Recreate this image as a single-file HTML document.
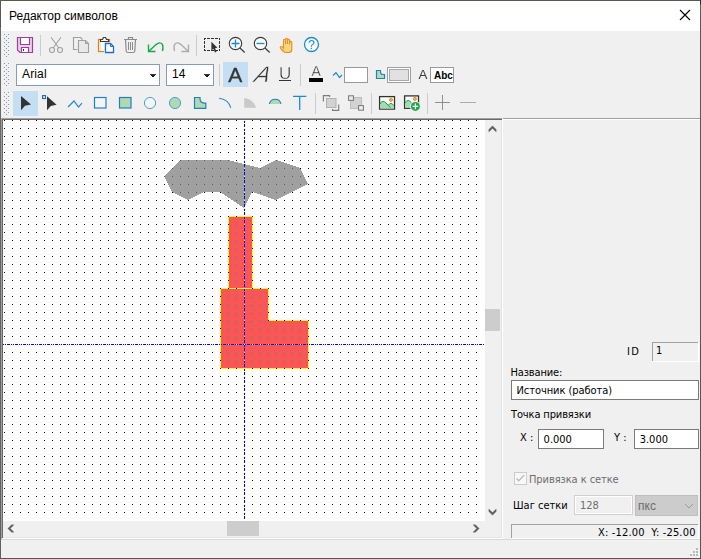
<!DOCTYPE html>
<html lang="ru">
<head>
<meta charset="utf-8">
<title>Редактор символов</title>
<style>
html,body{margin:0;padding:0;}
body{width:701px;height:559px;overflow:hidden;position:relative;background:#f0f0f0;
  font-family:"Liberation Sans","DejaVu Sans",sans-serif;font-size:12px;color:#000;}
.abs{position:absolute;}
#win{position:absolute;left:0;top:0;width:701px;height:559px;background:#f0f0f0;overflow:hidden;}
/* window frame */
#bt{left:0;top:0;width:701px;height:1px;background:#5c594e;}
#bl{left:0;top:0;width:1px;height:559px;background:linear-gradient(#5c594e 0,#5c594e 26px,#404040 26px,#404040 27px,#6a6a6a 27px,#606060 100%);}
#br{left:700px;top:0;width:1px;height:559px;background:linear-gradient(#1a3555 0,#1a3555 4px,#6b6a35 5px,#6b6a35 9px,#585858 12px,#555 100%);}
#bb{left:0;top:558px;width:701px;height:1px;background:#555;}
#title{left:1px;top:1px;width:699px;height:30px;background:#fff;}
#title span{position:absolute;left:8px;top:7px;font-size:12px;line-height:16px;white-space:nowrap;}
.tahoma{font-family:"DejaVu Sans Condensed","Liberation Sans",sans-serif;font-size:11px;line-height:13px;white-space:nowrap;}
.segoe{font-family:"Liberation Sans",sans-serif;font-size:12px;line-height:14px;white-space:nowrap;}
.edit{position:absolute;box-sizing:border-box;border:1px solid #7a7a7a;background:#fff;}
.hl{position:absolute;background:#c4def3;}
.sep{position:absolute;width:1px;background:#cbcbd2;}
svg{position:absolute;left:0;top:0;overflow:visible;}
</style>
</head>
<body>
<div id="win">
  <div class="abs" id="title"><span>Редактор символов</span></div>

  <!-- TOOLBARS -->
  <div id="toolbars">
    <!-- highlighted (checked) buttons -->
    <div class="hl" style="left:223px;top:62px;width:25px;height:25px;"></div>
    <div class="hl" style="left:13px;top:91px;width:25px;height:25px;"></div>
    <!-- separators -->
    <div class="sep" style="left:40px;top:35px;height:21px;"></div>
    <div class="sep" style="left:196px;top:35px;height:21px;"></div>
    <div class="sep" style="left:219px;top:64px;height:22px;"></div>
    <div class="sep" style="left:300px;top:64px;height:22px;"></div>
    <div class="sep" style="left:315px;top:93px;height:21px;"></div>
    <div class="sep" style="left:371px;top:93px;height:21px;"></div>
    <div class="sep" style="left:427px;top:93px;height:21px;"></div>
    <!-- combos -->
    <div class="abs" style="left:16px;top:64px;width:144px;height:22px;box-sizing:border-box;border:1px solid #8799be;background:#fff;"></div>
    <span class="abs segoe" id="t_arial" style="left:22px;top:67px;letter-spacing:0.15px;">Arial</span>
    <div class="abs" style="left:166px;top:64px;width:48px;height:22px;box-sizing:border-box;border:1px solid #8799be;background:#fff;"></div>
    <span class="abs segoe" id="t_14" style="left:172px;top:67px;">14</span>
    <!-- colour wells -->
    <div class="abs" style="left:344px;top:67px;width:24px;height:16px;box-sizing:border-box;border:1px solid #999;background:#fff;"></div>
    <div class="abs" style="left:387px;top:67px;width:24px;height:16px;box-sizing:border-box;border:1px solid #a0a0a0;background:#fff;"></div>
    <div class="abs" style="left:389px;top:69px;width:20px;height:12px;box-sizing:border-box;border:1px solid #a8a8a8;background:#e1e1e1;"></div>
    <div class="abs" style="left:430px;top:67px;width:24px;height:16px;box-sizing:border-box;border:1px solid #999;background:#fff;"></div>
    <span class="abs" id="t_abc" style="left:434px;top:70px;font:bold 10px/12px 'Liberation Sans',sans-serif;">Abc</span>

    <svg id="icons" width="701" height="90" viewBox="0 30 701 90" style="left:0;top:30px;" fill="none">
      <g fill="#8595bb" shape-rendering="crispEdges"><rect x="4" y="34" width="1" height="1"/><rect x="8" y="34" width="1" height="1"/><rect x="6" y="36" width="1" height="1"/><rect x="4" y="38" width="1" height="1"/><rect x="8" y="38" width="1" height="1"/><rect x="6" y="40" width="1" height="1"/><rect x="4" y="42" width="1" height="1"/><rect x="8" y="42" width="1" height="1"/><rect x="6" y="44" width="1" height="1"/><rect x="4" y="46" width="1" height="1"/><rect x="8" y="46" width="1" height="1"/><rect x="6" y="48" width="1" height="1"/><rect x="4" y="50" width="1" height="1"/><rect x="8" y="50" width="1" height="1"/><rect x="6" y="52" width="1" height="1"/><rect x="4" y="54" width="1" height="1"/><rect x="8" y="54" width="1" height="1"/><rect x="6" y="56" width="1" height="1"/></g>
      <g fill="#8595bb" shape-rendering="crispEdges"><rect x="4" y="63" width="1" height="1"/><rect x="8" y="63" width="1" height="1"/><rect x="6" y="65" width="1" height="1"/><rect x="4" y="67" width="1" height="1"/><rect x="8" y="67" width="1" height="1"/><rect x="6" y="69" width="1" height="1"/><rect x="4" y="71" width="1" height="1"/><rect x="8" y="71" width="1" height="1"/><rect x="6" y="73" width="1" height="1"/><rect x="4" y="75" width="1" height="1"/><rect x="8" y="75" width="1" height="1"/><rect x="6" y="77" width="1" height="1"/><rect x="4" y="79" width="1" height="1"/><rect x="8" y="79" width="1" height="1"/><rect x="6" y="81" width="1" height="1"/><rect x="4" y="83" width="1" height="1"/><rect x="8" y="83" width="1" height="1"/><rect x="6" y="85" width="1" height="1"/></g>
      <g fill="#8595bb" shape-rendering="crispEdges"><rect x="4" y="92" width="1" height="1"/><rect x="8" y="92" width="1" height="1"/><rect x="6" y="94" width="1" height="1"/><rect x="4" y="96" width="1" height="1"/><rect x="8" y="96" width="1" height="1"/><rect x="6" y="98" width="1" height="1"/><rect x="4" y="100" width="1" height="1"/><rect x="8" y="100" width="1" height="1"/><rect x="6" y="102" width="1" height="1"/><rect x="4" y="104" width="1" height="1"/><rect x="8" y="104" width="1" height="1"/><rect x="6" y="106" width="1" height="1"/><rect x="4" y="108" width="1" height="1"/><rect x="8" y="108" width="1" height="1"/><rect x="6" y="110" width="1" height="1"/><rect x="4" y="112" width="1" height="1"/><rect x="8" y="112" width="1" height="1"/><rect x="6" y="114" width="1" height="1"/></g>
      <!-- ROW 1 -->
      <g id="i_save" stroke="#9c3f9c" stroke-width="1.2">
        <path d="M17.5 37.5 H32.5 V52.5 H20 L17.5 50 Z" fill="#ead2ea" stroke="none"/>
        <path d="M20.5 37.5 V44.5 H29.5 V37.5" fill="#fff"/>
        <path d="M21.5 52.5 V47.5 H28.5 V52.5" fill="#fff"/>
        <path d="M17.5 37.5 H32.5 V52.5 H20 L17.5 50 Z"/>
        <rect x="23" y="49" width="1" height="2" fill="#333" stroke="none"/>
      </g>
      <g id="i_cut" stroke="#a0a0a0" stroke-width="1.1">
        <path d="M51 37.3 L58.8 48 M61 37.3 L53.2 48"/>
        <circle cx="52" cy="50" r="2.5"/><circle cx="60" cy="50" r="2.5"/>
      </g>
      <g id="i_copy" stroke="#a0a0a0" stroke-width="1.1">
        <path d="M77.5 49.5 H73.5 V37.5 H80.5 L82.5 39.5"/>
        <path d="M78.5 40.5 H85.5 L88.5 43.5 V52.5 H78.5 Z" fill="#e9e9e9"/>
        <path d="M85.5 40.5 V43.5 H88.5"/>
      </g>
      <g id="i_paste" stroke-width="1.2">
        <rect x="98.5" y="39.5" width="11" height="12" fill="#fff" stroke="#e87c1e"/>
        <path d="M100 41 V51" stroke="#f8d89a" stroke-width="1"/>
        <path d="M100.5 41.5 V39.5 H102.5 L103.5 37.5 H105.5 L106.5 39.5 H108.5 V41.5 Z" fill="#fff" stroke="#3b3b3b"/>
        <rect x="104" y="42" width="11" height="12" fill="#f0f0f0" stroke="none"/>
        <path d="M105.5 43.5 H110.5 L113.5 46.5 V52.5 H105.5 Z" fill="#fff" stroke="#1e6fc0" stroke-width="1.3"/>
        <path d="M110.5 43.5 V46.5 H113.5" stroke="#1e6fc0" stroke-width="1"/>
      </g>
      <g id="i_del" stroke="#8c8c8c" stroke-width="1.2">
        <path d="M124 39.5 H137 M128.5 39.5 V37.5 H132.5 V39.5"/>
        <path d="M125.5 39.5 L126.2 51 Q126.3 52.5 128 52.5 H133 Q134.7 52.5 134.8 51 L135.5 39.5"/>
        <path d="M128.5 42 V50 M130.5 42 V50 M132.5 42 V50" stroke-width="1"/>
      </g>
      <g id="i_undo" stroke="#1ba84a" stroke-width="1.4">
        <path d="M148.5 44.5 V51.5 H155.5"/>
        <path d="M148.8 51.2 L156 44.6 Q160 41.3 162.2 44.2 Q163.6 46.5 162.5 51"/>
      </g>
      <g id="i_redo" stroke="#adadad" stroke-width="1.4">
        <path d="M188.5 44.5 V51.5 H181.5"/>
        <path d="M188.2 51.2 L181 44.6 Q177 41.3 174.8 44.2 Q173.4 46.5 174.5 51"/>
      </g>
      <g id="i_sel">
        <path d="M204 38.5 H220 M204 50.5 H220 M204.5 38 V51 M219.5 38 V51" stroke="#333" stroke-width="1" stroke-dasharray="3 1" stroke-dashoffset="1" shape-rendering="crispEdges"/>
        <path d="M211.4 41.8 V50.4 L213.4 48.7 L215 52.4 L216.6 51.7 L215 48.2 L217.4 47.7 Z" fill="#333"/>
      </g>
      <g id="i_zin">
        <circle cx="235.5" cy="43.5" r="6.2" fill="#fbfbfb" stroke="#3b3b3b" stroke-width="1.15"/>
        <path d="M231.5 43.5 H239.5 M235.5 39.5 V47.5" stroke="#1e8ad2" stroke-width="1.3"/>
        <path d="M240 48 L244.7 52.5" stroke="#3b3b3b" stroke-width="1.2"/>
      </g>
      <g id="i_zout">
        <circle cx="260.5" cy="43.5" r="6.2" fill="#fbfbfb" stroke="#3b3b3b" stroke-width="1.15"/>
        <path d="M256.5 43.5 H264.5" stroke="#1e8ad2" stroke-width="1.3"/>
        <path d="M265 48 L269.7 52.5" stroke="#3b3b3b" stroke-width="1.2"/>
      </g>
      <g id="i_hand" stroke="#f08a24" stroke-width="1.1">
        <path fill="#f7d680" d="M283.5 48.5 V40.5 Q283.5 39.3 284.5 39.3 Q285.5 39.3 285.5 40.5 V39.5 Q285.5 38.3 286.5 38.3 Q287.5 38.3 287.5 39.5 V40 Q287.5 39 288.6 39 Q289.6 39 289.6 40.2 V42.2 Q289.6 41.2 290.7 41.2 Q291.8 41.2 291.8 42.4 V49.5 Q291.8 52.5 288.8 52.5 H286 Q284.5 52.5 283.5 51.5 L280.5 48.3 Q279.8 47.2 280.8 46.6 Q281.6 46.2 282.3 47 Z"/>
        <path d="M285.5 40.5 V44 M287.5 40 V44 M289.6 42 V44.5"/>
      </g>
      <g id="i_help">
        <circle cx="311.5" cy="44.5" r="7" fill="#fbfbfb" stroke="#1e8ad2" stroke-width="1.3"/>
        <text x="311.6" y="49" text-anchor="middle" font-family="Liberation Sans, sans-serif" font-size="12.5" fill="#1e8ad2" stroke="none" opacity="0.99">?</text>
      </g>
      <!-- ROW 2 -->
      <g fill="#101830" shape-rendering="crispEdges"><rect x="150" y="74" width="6" height="1" fill="#303850"/><rect x="151" y="75" width="4" height="1"/><rect x="152" y="76" width="2" height="1"/></g>
      <g fill="#101830" shape-rendering="crispEdges"><rect x="204" y="74" width="6" height="1" fill="#303850"/><rect x="205" y="75" width="4" height="1"/><rect x="206" y="76" width="2" height="1"/></g>
      <text id="g_bold" x="235.2" y="81.7" text-anchor="middle" font-family="Liberation Sans, sans-serif" font-size="21" fill="#333" stroke="#333" stroke-width="0.35" opacity="0.99">A</text>
      <text id="g_ital" transform="translate(259.5 82) skewX(-27)" x="0" y="0" text-anchor="middle" font-family="Liberation Sans, sans-serif" font-size="22.5" fill="#333" stroke="#f0f0f0" stroke-width="0.4" opacity="0.99">A</text>
      <text id="g_u" x="285.1" y="79.1" text-anchor="middle" font-family="Liberation Sans, sans-serif" font-size="17" fill="#333" stroke="#f0f0f0" stroke-width="0.3" opacity="0.99">U</text>
      <rect x="279" y="80" width="12" height="1" fill="#333" shape-rendering="crispEdges"/>
      <text id="g_fc" x="316.1" y="76.1" text-anchor="middle" font-family="Liberation Sans, sans-serif" font-size="14" fill="#333" stroke="#f0f0f0" stroke-width="0.3" opacity="0.99">A</text>
      <rect x="309" y="78" width="14" height="4" fill="#000" shape-rendering="crispEdges"/>
      <path d="M333 75.5 L336 72.7 L339.5 77.5 L342 75" stroke="#1e8ad2" stroke-width="1.2"/>
      <path d="M376.5 70.5 H380.5 V72 Q380.5 74.5 383 74.5 H384.5 V78.5 H376.5 Z" fill="#b5dcae" stroke="#1e80c8" stroke-width="1.2"/>
      <text id="g_a2" x="423" y="78.9" text-anchor="middle" font-family="Liberation Sans, sans-serif" font-size="13.3" fill="#3a3a3a" opacity="0.99">A</text>
      <!-- ROW 3 -->
      <path d="M21 96 L31 104.6 L25 105.8 L21 110.3 Z" fill="#333"/>
      <path d="M47 96.3 L56.6 104.7 L50.8 105.9 L47 110.3 Z" fill="#333"/>
      <rect x="42.6" y="95.6" width="2.9" height="2.9" fill="#fff" stroke="#1e6fc0" stroke-width="1.2"/>
      <path d="M68 107 L74 101 L78.5 107 L82 103.2" stroke="#1e8ad2" stroke-width="1.2"/>
      <rect x="94.5" y="97.5" width="11.5" height="10.5" stroke="#1e80c8" stroke-width="1.2" fill="#f4f4f4"/>
      <rect x="119.5" y="97.5" width="11.5" height="10.5" stroke="#1e80c8" stroke-width="1.2" fill="#b0d9b0"/>
      <circle cx="150" cy="103" r="5.6" stroke="#49a0da" stroke-width="1" fill="#f6f6f6"/>
      <circle cx="175" cy="103" r="5.6" stroke="#49a0da" stroke-width="1" fill="#b0d9b0"/>
      <path d="M194.5 97.5 H200 V98.5 Q200 103.2 205 103.2 H205.8 V108.4 H194.5 Z" stroke="#1e80c8" stroke-width="1.2" fill="#b0d9b0"/>
      <path d="M219 98.3 Q228.5 99.5 230.8 107.8" stroke="#2a8fd6" stroke-width="1.1"/>
      <path d="M244.2 98 Q253.5 99 256 107.8 H244.2 Z" fill="#c9c9c9"/>
      <path d="M269.3 104 Q270.5 99.2 275.2 99.2 Q280 99.2 281 104 Z" fill="#b0d9b0"/>
      <path d="M269.3 104 Q270.5 99.2 275.2 99.2 Q280 99.2 281 104" stroke="#1e80c8" stroke-width="1.1"/>
      <path d="M293 96.4 H306.3 M299.7 96.4 V110" stroke="#1e8ad2" stroke-width="1.3"/>
      <g id="i_front" stroke="#7c7c7c" stroke-width="1.15">
        <rect x="326.5" y="98.5" width="9.5" height="9" fill="#d2d2d2" stroke="#b0b0b0" stroke-width="1"/>
        <path d="M323.4 101.6 V95.6 H329.6 V97"/>
        <path d="M338.7 104.4 V110.4 H332.5 V109"/>
      </g>
      <g id="i_back" stroke="#7c7c7c" stroke-width="1.05">
        <rect x="350.5" y="97.5" width="11" height="11" fill="#d2d2d2" stroke="#bdbdbd" stroke-width="1"/>
        <rect x="348.55" y="95.8" width="4.9" height="4.6" fill="#ececec"/>
        <rect x="358.55" y="105.6" width="4.9" height="4.6" fill="#ececec"/>
      </g>
      <g id="i_img1">
        <rect x="379.6" y="96.6" width="14.9" height="12.5" fill="#fff" stroke="#333" stroke-width="1.3"/>
        <path d="M380.3 108.4 V104 Q381 101.3 383 101.3 Q384.6 101.3 386 103 L388.2 105.4 Q389.4 103.4 391 103.4 Q392.6 103.4 393.8 105.8 V108.4 Z" fill="#a9d9b4"/>
        <path d="M380.3 104 Q381 101.3 383 101.3 Q384.6 101.3 386 103 L390.4 107.7 M388.2 105.4 Q389.4 103.4 391 103.4 Q392.6 103.4 393.8 105.8" stroke="#1ba84a" stroke-width="1"/>
        <circle cx="391" cy="99.8" r="1.6" fill="#f6a560" stroke="#ee7f22" stroke-width="0.8"/>
      </g>
      <g id="i_img2">
        <rect x="404.6" y="95.9" width="13.9" height="12.4" fill="#fff" stroke="#333" stroke-width="1.3"/>
        <path d="M405.3 107.6 V103.2 Q406 100.5 408 100.5 Q409.6 100.5 411 102.2 L413 104.5 V107.6 Z" fill="#a9d9b4"/>
        <path d="M405.3 103.2 Q406 100.5 408 100.5 Q409.6 100.5 411 102.2 L412.4 103.8" stroke="#1ba84a" stroke-width="1"/>
        <circle cx="414.9" cy="98.9" r="1.6" fill="#f6a560" stroke="#ee7f22" stroke-width="0.8"/>
        <circle cx="415.4" cy="106.4" r="5.4" fill="#f0f0f0"/>
        <circle cx="415.4" cy="106.4" r="4.5" fill="#1ba84a"/>
        <path d="M412.6 106.4 H418.2 M415.4 103.6 V109.2" stroke="#fff" stroke-width="1.3"/>
      </g>
      <path d="M435 102.5 H450 M442.5 95 V110" stroke="#8f8f8f" stroke-width="1" shape-rendering="crispEdges"/>
      <path d="M460 102.5 H476" stroke="#ababab" stroke-width="1" shape-rendering="crispEdges"/>
    </svg>
    <!-- window close glyph -->
    <svg width="12" height="12" viewBox="679 9 12 12" style="left:679px;top:9px;"><path d="M680 10 L690 20 M690 10 L680 20" stroke="#000" stroke-width="1.1" fill="none"/></svg>
  </div>

  <!-- CANVAS -->
  <div id="canvaswrap">
    <!-- sunken client edge -->
    <div class="abs" style="left:1px;top:118px;width:501px;height:421px;background:#a0a0a0;"></div>
    <div class="abs" style="left:2px;top:119px;width:501px;height:420px;background:#fff;"></div>
    <div class="abs" style="left:2px;top:119px;width:500px;height:419px;background:#696969;"></div>
    <div class="abs" style="left:3px;top:120px;width:499px;height:418px;background:#e3e3e3;"></div>
    <div class="abs" style="left:3px;top:120px;width:498px;height:417px;background:#f0f0f0;"></div>
    <!-- drawing surface -->
    <svg width="482" height="401" viewBox="3 120 482 401" style="left:3px;top:120px;isolation:isolate;" shape-rendering="crispEdges">
      <defs>
        <pattern id="dots" x="0" y="0" width="8" height="8" patternUnits="userSpaceOnUse">
          <rect x="4" y="0" width="1" height="1" fill="#fff"/>
        </pattern>
      </defs>
      <rect x="3" y="120" width="482" height="401" fill="#fff"/>
      <!-- smoke -->
      <polygon fill="#a0a0a0" points="164,176 180,160 228,160 260,168 276,160 300,168 308,184 276,200 252,192 244,208 220,192 204,192 188,200 172,192"/>
      <!-- factory -->
      <rect x="228.5" y="216.5" width="24" height="72" fill="#fb5656" stroke="#ffff00" stroke-width="1"/>
      <polygon points="220.5,288.5 268.5,288.5 268.5,320.5 308.5,320.5 308.5,368.5 220.5,368.5" fill="#fb5656" stroke="#ffff00" stroke-width="1"/>
      <!-- axes -->
      <line x1="3" y1="344.5" x2="484" y2="344.5" stroke="#0000ff" stroke-width="1" stroke-dasharray="3 1"/>
      <line x1="244.5" y1="120" x2="244.5" y2="519" stroke="#0000ff" stroke-width="1" stroke-dasharray="3 1"/>
      <!-- grid (inverting dots) -->
      <rect x="3" y="120" width="481" height="400" fill="url(#dots)" style="mix-blend-mode:difference"/>
    </svg>
    <!-- vertical scrollbar -->
    <div class="abs" style="left:485px;top:309px;width:15px;height:22px;background:#cdcdcd;"></div>
    <svg width="16" height="401" viewBox="485 120 16 401" style="left:485px;top:120px;">
      <path d="M492.5 125.8 L496.2 129.5 V132 L492.5 128.4 L488.8 132 V129.5 Z" fill="#606060" stroke="#606060" stroke-width="0.3"/>
      <path d="M492.5 515.2 L488.8 511.5 V509 L492.5 512.6 L496.2 509 V511.5 Z" fill="#606060" stroke="#606060" stroke-width="0.3"/>
    </svg>
    <!-- horizontal scrollbar -->
    <div class="abs" style="left:227px;top:521px;width:32px;height:15px;background:#cdcdcd;"></div>
    <svg width="482" height="16" viewBox="3 521 482 16" style="left:3px;top:521px;">
      <path d="M7.8 528.5 L11.5 524.8 H14 L10.4 528.5 L14 532.2 H11.5 Z" fill="#606060" stroke="#606060" stroke-width="0.3"/>
      <path d="M479.2 528.5 L475.5 532.2 H473 L476.6 528.5 L473 524.8 H475.5 Z" fill="#606060" stroke="#606060" stroke-width="0.3"/>
    </svg>
  </div>

  <!-- RIGHT PANEL -->
  <div id="panel">
    <div class="abs" style="left:503px;top:118px;width:197px;height:1px;background:#a0a0a0;"></div>
    <div class="abs" style="left:503px;top:119px;width:197px;height:1px;background:#fff;"></div>

    <span class="abs tahoma" id="t_id" style="left:627px;top:345px;letter-spacing:1.3px;">ID</span>
    <div class="abs" style="left:652px;top:342px;width:47px;height:20px;background:#fff;"></div>
    <div class="abs" style="left:652px;top:342px;width:46px;height:19px;background:#a0a0a0;"></div>
    <div class="abs" style="left:653px;top:343px;width:45px;height:18px;background:#f0f0f0;"></div>
    <span class="abs tahoma" id="t_1" style="left:656px;top:344px;">1</span>

    <span class="abs tahoma" id="t_name" style="left:510.6px;top:366px;letter-spacing:-0.17px;">Название:</span>
    <div class="edit" style="left:511px;top:380px;width:188px;height:20px;"></div>
    <span class="abs tahoma" id="t_src" style="left:516.5px;top:384px;letter-spacing:-0.06px;">Источник (работа)</span>

    <span class="abs tahoma" id="t_pt" style="left:511px;top:408px;letter-spacing:-0.13px;">Точка привязки</span>
    <span class="abs tahoma" id="t_x" style="left:520px;top:431px;">X :</span>
    <div class="edit" style="left:538px;top:429px;width:66px;height:20px;"></div>
    <span class="abs tahoma" id="t_x0" style="left:543.6px;top:433px;">0.000</span>
    <span class="abs tahoma" id="t_y" style="left:614px;top:431px;">Y :</span>
    <div class="edit" style="left:634px;top:429px;width:65px;height:20px;"></div>
    <span class="abs tahoma" id="t_y0" style="left:639.7px;top:433px;">3.000</span>

    <div class="abs" style="left:514px;top:472px;width:13px;height:13px;box-sizing:border-box;border:1px solid #ccc;background:#f8f8f8;"></div>
    <svg width="13" height="13" viewBox="514 472 13 13" style="left:514px;top:472px;"><path d="M516.5 478.5 L518.7 480.8 L524.3 475" fill="none" stroke="#bcbcbc" stroke-width="1.3"/></svg>
    <span class="abs tahoma" id="t_snap" style="left:529px;top:473px;color:#6d6d6d;letter-spacing:-0.08px;">Привязка к сетке</span>

    <span class="abs tahoma" id="t_step" style="left:513px;top:499px;">Шаг сетки</span>
    <div class="abs" style="left:574px;top:495px;width:59px;height:20px;box-sizing:border-box;border:1px solid #d0d0d0;background:#fff;"></div>
    <div class="abs" style="left:576px;top:497px;width:55px;height:16px;background:#f0f0f0;"></div>
    <span class="abs tahoma" id="t_128" style="left:580px;top:499px;color:#6d6d6d;">128</span>
    <div class="abs" style="left:635px;top:495px;width:63px;height:21px;box-sizing:border-box;border:1px solid #bfbfbf;background:#ccc;"></div>
    <span class="abs segoe" id="t_pks" style="left:638px;top:499px;color:#6d6d6d;">пкс</span>
    <svg width="12" height="8" viewBox="683 502 12 8" style="left:683px;top:502px;"><path d="M685 504 L689 508 L693 504" fill="none" stroke="#9a9a9a" stroke-width="1"/></svg>

    <div class="abs" style="left:511px;top:524px;width:188px;height:15px;background:#fff;"></div>
    <div class="abs" style="left:511px;top:524px;width:187px;height:14px;background:#a0a0a0;"></div>
    <div class="abs" style="left:512px;top:525px;width:186px;height:13px;background:#f0f0f0;"></div>
    <span class="abs tahoma" id="t_xy" style="left:598px;top:526px;white-space:pre;letter-spacing:0.16px;">X: -12.00  Y: -25.00</span>
  </div>

  <!-- STATUS BAR -->
  <div id="status">
    <div class="abs" style="left:1px;top:539px;width:699px;height:1px;background:#d7d7d7;"></div>
    <div class="abs" style="left:1px;top:540px;width:699px;height:18px;background:#f0f0f0;"></div>
    <svg width="12" height="12" viewBox="688 546 12 12" style="left:688px;top:546px;" shape-rendering="crispEdges">
      <g fill="#b8b8b8">
        <rect x="696" y="548" width="2" height="2"/>
        <rect x="693" y="551" width="2" height="2"/><rect x="696" y="551" width="2" height="2"/>
        <rect x="690" y="554" width="2" height="2"/><rect x="693" y="554" width="2" height="2"/><rect x="696" y="554" width="2" height="2"/>
      </g>
    </svg>
  </div>

  <div class="abs" id="bt"></div>
  <div class="abs" id="bl"></div>
  <div class="abs" id="br"></div>
  <div class="abs" id="bb"></div>
</div>
</body>
</html>
